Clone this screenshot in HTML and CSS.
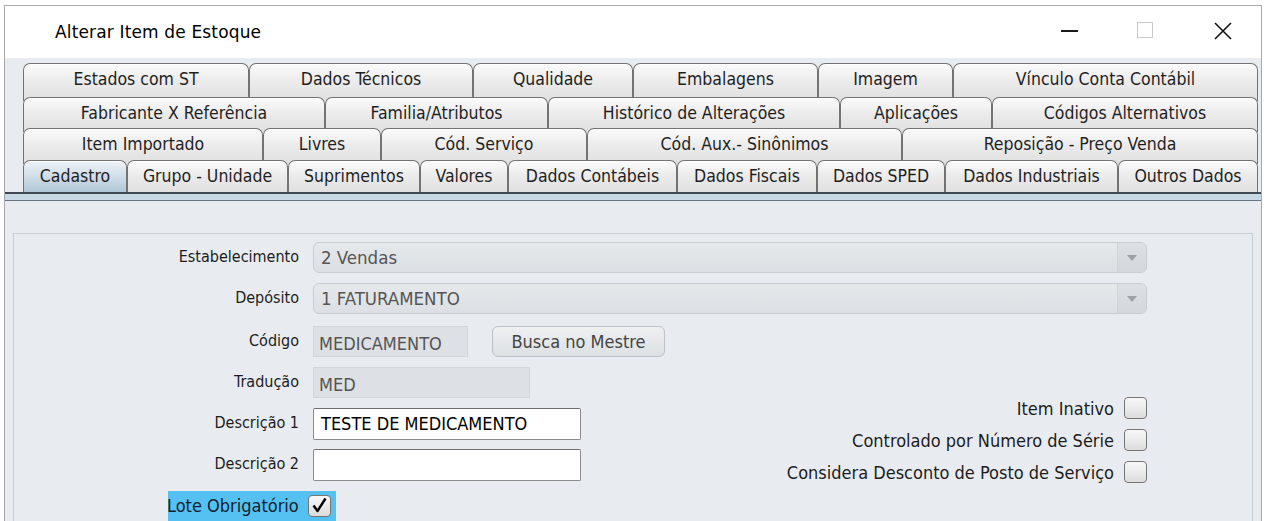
FILE: index.html
```html
<!DOCTYPE html>
<html lang="pt">
<head>
<meta charset="utf-8">
<title>Alterar Item de Estoque</title>
<link rel="stylesheet" href="styles.css">
</head>
<body>
<div class="window">
  <div class="titlebar">
    <span class="title">Alterar Item de Estoque</span>
    <div class="controls">
      <span class="ctl-min"></span>
      <span class="ctl-max"></span>
      <svg class="ctl-close" width="20" height="18" viewBox="0 0 20 18"><path d="M2 1 L18 17 M18 1 L2 17" stroke="#111" stroke-width="1.6" fill="none"/></svg>
    </div>
  </div>
  <div class="wbody">
    <div class="tabs">
      <div class="tabrow r1">
        <div class="tab">Estados com ST</div>
        <div class="tab">Dados Técnicos</div>
        <div class="tab">Qualidade</div>
        <div class="tab">Embalagens</div>
        <div class="tab">Imagem</div>
        <div class="tab">Vínculo Conta Contábil</div>
      </div>
      <div class="tabrow r2">
        <div class="tab">Fabricante X Referência</div>
        <div class="tab">Familia/Atributos</div>
        <div class="tab">Histórico de Alterações</div>
        <div class="tab">Aplicações</div>
        <div class="tab">Códigos Alternativos</div>
      </div>
      <div class="tabrow r3">
        <div class="tab">Item Importado</div>
        <div class="tab">Livres</div>
        <div class="tab">Cód. Serviço</div>
        <div class="tab">Cód. Aux.- Sinônimos</div>
        <div class="tab">Reposição - Preço Venda</div>
      </div>
      <div class="tabrow r4">
        <div class="tab selected">Cadastro</div>
        <div class="tab">Grupo - Unidade</div>
        <div class="tab">Suprimentos</div>
        <div class="tab">Valores</div>
        <div class="tab">Dados Contábeis</div>
        <div class="tab">Dados Fiscais</div>
        <div class="tab">Dados SPED</div>
        <div class="tab">Dados Industriais</div>
        <div class="tab">Outros Dados</div>
      </div>
    </div>
    <div class="tabband"></div>
    <div class="content">
      <div class="panel">
        <div class="form">
          <div class="row">
            <span class="lbl">Estabelecimento</span>
            <div class="combo"><span class="combo-text">2 Vendas</span><span class="combo-arrow"></span></div>
          </div>
          <div class="row">
            <span class="lbl">Depósito</span>
            <div class="combo"><span class="combo-text">1 FATURAMENTO</span><span class="combo-arrow"></span></div>
          </div>
          <div class="lower">
            <div class="left">
              <div class="row">
                <span class="lbl">Código</span>
                <div class="field ro w-codigo">MEDICAMENTO</div>
                <div class="button">Busca no Mestre</div>
              </div>
              <div class="row">
                <span class="lbl">Tradução</span>
                <div class="field ro w-trad">MED</div>
              </div>
              <div class="row">
                <span class="lbl">Descrição 1</span>
                <div class="field edit w-desc">TESTE DE MEDICAMENTO</div>
              </div>
              <div class="row">
                <span class="lbl">Descrição 2</span>
                <div class="field edit w-desc"></div>
              </div>
              <div class="row">
                <div class="lote">
                  <span class="lote-text">Lote Obrigatório</span>
                  <span class="check checked"><svg width="21" height="21" viewBox="0 0 21 21"><path d="M4.5 10.5 L8.5 16 L16.5 3.5" stroke="#000" stroke-width="2.4" fill="none" stroke-linejoin="round"/></svg></span>
                </div>
              </div>
            </div>
            <div class="right">
              <div class="cbrow"><span class="cblbl">Item Inativo</span><span class="check"></span></div>
              <div class="cbrow"><span class="cblbl">Controlado por Número de Série</span><span class="check"></span></div>
              <div class="cbrow"><span class="cblbl">Considera Desconto de Posto de Serviço</span><span class="check"></span></div>
            </div>
          </div>
        </div>
      </div>
    </div>
  </div>
</div>
</body>
</html>
```

FILE: styles.css
```css
html, body {
  margin: 0;
  padding: 0;
  height: 521px;
  overflow: hidden;
  background: #ffffff;
}

body {
  padding: 5px 0 0 4px;
  box-sizing: border-box;
  font-family: "DejaVu Sans Condensed", "DejaVu Sans", sans-serif;
  color: #222;
}

.window {
  width: 1258px;
  height: 520px;
  border: 1px solid #a9a9a9;
  border-bottom: none;
  box-sizing: border-box;
  display: flex;
  flex-direction: column;
  background: #e8ecf0;
}

.titlebar {
  height: 52px;
  flex: 0 0 52px;
  background: #ffffff;
  display: flex;
  align-items: center;
  padding-left: 50px;
  padding-right: 28px;
}

.title {
  font-family: "DejaVu Sans", sans-serif;
  font-size: 17px;
  color: #000;
  letter-spacing: 0.15px;
}

.controls {
  margin-left: auto;
  display: flex;
  align-items: center;
}

.ctl-min {
  width: 17px;
  height: 2px;
  background: #1a1a1a;
  margin-top: -3px;
}

.ctl-max {
  width: 14px;
  height: 14px;
  border: 1px solid #c9c9c9;
  margin-left: 59px;
  margin-top: -5px;
}

.ctl-close {
  margin-left: 60px;
  margin-top: -3px;
}

.wbody {
  flex: 1;
  display: flex;
  flex-direction: column;
}

.tabs {
  padding: 5px 3px 0 18px;
}

.tabrow {
  display: grid;
  position: relative;
}

.tabrow + .tabrow {
  margin-top: -4px;
}

.r1 { height: 38px; z-index: 1; grid-template-columns: 226px 224px 160px 185px 135px 305px; }
.r2 { height: 35px; z-index: 2; grid-template-columns: 302px 223px 292px 152px 266px; }
.r3 { height: 36px; z-index: 3; grid-template-columns: 240px 118px 206px 315px 356px; }
.r4 { height: 32px; z-index: 4; grid-template-columns: 104px 161px 132px 88px 169px 140px 128px 173px 140px; }

.tab {
  border: 1px solid #737373;
  border-bottom: none;
  border-radius: 7px 7px 0 0;
  background: linear-gradient(#fbfbfb, #ececec 45%, #e0e0e0);
  box-shadow: inset 0 1px 0 #ffffff;
  display: flex;
  justify-content: center;
  align-items: flex-start;
  padding-top: 5px;
  font-size: 17.5px;
  color: #1f1f1f;
  white-space: nowrap;
  box-sizing: border-box;
}

.tab.selected {
  background: linear-gradient(#eef3f7, #cddbe6 55%, #b1c7d7);
}

.tabband {
  height: 6px;
  border-top: 2px solid #404953;
  border-bottom: 1px solid #68747f;
  background: #c8d9e6;
}

.content {
  padding: 32px 8px 0 8px;
  flex: 1;
}

.panel {
  border: 1px solid #c7ccd1;
  border-bottom: none;
  height: 100%;
  box-sizing: border-box;
  padding-top: 8px;
}

.form {
  width: 1133px;
  display: flex;
  flex-direction: column;
  gap: 10px;
}

.row {
  display: flex;
  align-items: center;
  height: 31px;
}

.lbl {
  width: 285px;
  flex: 0 0 285px;
  text-align: right;
  margin-right: 14px;
  font-size: 16px;
  color: #1c1c1c;
  white-space: nowrap;
  margin-top: -2px;
}

.combo {
  flex: 1;
  height: 31px;
  box-sizing: border-box;
  border: 1px solid #c9cdd2;
  border-radius: 6px;
  background: linear-gradient(#e6e9ec, #dcdfe3);
  display: flex;
  align-items: center;
}

.combo-text {
  flex: 1;
  padding-left: 7px;
  font-size: 18.5px;
  color: #555;
}

.combo-arrow {
  width: 28px;
  height: 100%;
  border-left: 1px solid #d0d4d8;
  background: linear-gradient(#dde0e4, #d3d7db);
  border-radius: 0 5px 5px 0;
  position: relative;
}

.combo-arrow::after {
  content: "";
  position: absolute;
  left: 9px;
  top: 12px;
  border-left: 5px solid transparent;
  border-right: 5px solid transparent;
  border-top: 6px solid #9da2a8;
}

.lower {
  display: flex;
  justify-content: space-between;
  margin-top: 2px;
}

.left {
  display: flex;
  flex-direction: column;
  gap: 10px;
}

.field {
  height: 31px;
  box-sizing: border-box;
  display: flex;
  align-items: center;
  font-size: 18px;
  white-space: nowrap;
}

.field.ro {
  background: #dde0e4;
  border: 1px solid #d3d6da;
  color: #555;
  padding-left: 5px;
  padding-top: 3px;
}

.field.edit {
  background: #ffffff;
  border: 1px solid #8c8c8c;
  border-top-color: #6e6e6e;
  border-radius: 2px;
  color: #000;
  padding-left: 7px;
  height: 32px;
}

.w-codigo { width: 155px; }
.w-trad { width: 217px; }
.w-desc { width: 268px; }

.button {
  margin-left: 24px;
  width: 173px;
  height: 31px;
  box-sizing: border-box;
  border: 1px solid #bcc1c6;
  border-radius: 6px;
  background: linear-gradient(#eef0f2, #dde0e4);
  display: flex;
  align-items: center;
  justify-content: center;
  font-size: 18px;
  color: #444;
}

.lote {
  margin-left: 154px;
  width: 168px;
  height: 30px;
  background: #55c1f2;
  display: flex;
  align-items: center;
  justify-content: space-between;
  padding-right: 5px;
  box-sizing: border-box;
}

.lote-text {
  font-size: 18px;
  color: #13212e;
  white-space: nowrap;
  margin-left: -1px;
}

.check {
  width: 23px;
  height: 22px;
  box-sizing: border-box;
  border: 1px solid #767676;
  border-radius: 4px;
  background: linear-gradient(#f8f8f8, #dcdcdc);
  display: flex;
  align-items: center;
  justify-content: center;
  flex: 0 0 auto;
}

.right {
  margin-top: 71px;
  display: flex;
  flex-direction: column;
  align-items: flex-end;
  gap: 10px;
}

.cbrow {
  display: flex;
  align-items: center;
  height: 22px;
}

.cblbl {
  font-size: 18px;
  color: #1c1c1c;
  margin-right: 10px;
  white-space: nowrap;
}
```
